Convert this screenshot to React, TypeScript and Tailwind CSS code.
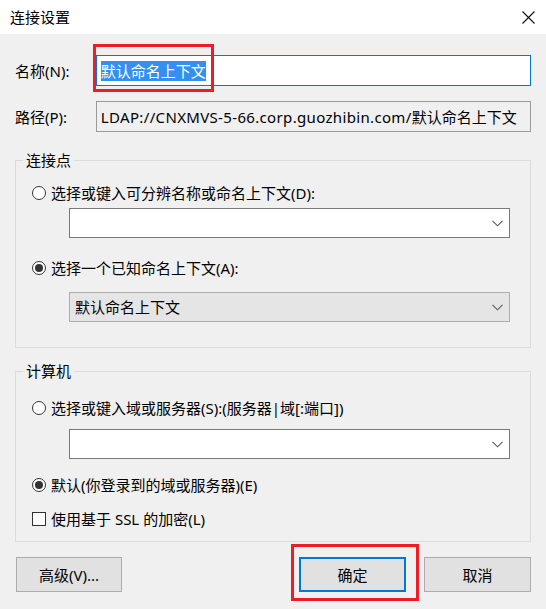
import React from "react";

function Chevron() {
  return (
    <svg width="11" height="7" viewBox="0 0 11 7">
      <path d="M0.5 0.8 L5.5 5.8 L10.5 0.8" fill="none" stroke="#5a5a5a" strokeWidth="1.1" />
    </svg>
  );
}

function Combo({ value, list }: { value?: string; list?: boolean }) {
  return (
    <div
      className={
        list
          ? "ml-[53px] flex h-[30px] w-[441px] items-center justify-between border border-[#adadad] bg-[#e5e5e5] pl-[5px] pr-[6px]"
          : "ml-[53px] flex h-[30px] w-[441px] items-center justify-between border border-[#7a7a7a] bg-white pl-[5px] pr-[6px]"
      }
    >
      <span className="text-[15px] leading-[20px] text-black">{value ?? ""}</span>
      <Chevron />
    </div>
  );
}

function Radio({ checked, label }: { checked?: boolean; label: string }) {
  return (
    <div className="flex h-[20px] items-center pl-[16px]">
      <span className="flex h-[14px] w-[14px] items-center justify-center rounded-full border border-[#333333] bg-white">
        {checked && <span className="h-[8px] w-[8px] rounded-full bg-[#333333]" />}
      </span>
      <span className="ml-[5px] text-[15px] leading-[20px] text-black">{label}</span>
    </div>
  );
}

function Group({ title, children, className }: { title: string; children: React.ReactNode; className: string }) {
  return (
    <fieldset className={"border border-[#dcdcdc] " + className}>
      <legend className="ml-[7px] px-[3px] text-[15px] leading-[20px] text-black">{title}</legend>
      {children}
    </fieldset>
  );
}

export default function App() {
  return (
    <div className="flex h-[609px] w-[546px] flex-col overflow-hidden bg-[#f0f0f0] font-['Noto_Sans','Noto_Sans_CJK_SC',sans-serif] text-black">
      {/* Title bar */}
      <div className="flex h-[34px] shrink-0 items-center justify-between bg-white pl-[10px] pr-[11px]">
        <span className="text-[15px] leading-[20px]">连接设置</span>
        <svg width="13" height="13" viewBox="0 0 13 13">
          <path d="M0.5 0.5 L12.5 12.5 M12.5 0.5 L0.5 12.5" stroke="#111" strokeWidth="1.1" fill="none" />
        </svg>
      </div>

      <div className="flex flex-col px-[15px]">
        {/* Name */}
        <div className="mt-[21px] flex items-center">
          <span className="w-[81px] text-[15px] leading-[20px]">名称(N):</span>
          <div className="relative flex h-[31px] w-[436px] items-center border border-[#0078d7] bg-white pl-[4px]">
            <span className="bg-[#3390f0] text-[15px] leading-[20px] text-white">默认命名上下文</span>
            <div className="pointer-events-none absolute left-[-4px] top-[-12px] h-[48px] w-[121px] border-[3px] border-[#ee1c25]" />
          </div>
        </div>

        {/* Path */}
        <div className="mt-[15px] flex items-center">
          <span className="w-[81px] text-[15px] leading-[20px]">路径(P):</span>
          <div className="flex h-[31px] w-[436px] items-center border border-[#9a9a9a] bg-[#f0f0f0] pl-[4px]">
            <span className="whitespace-nowrap text-[15px] leading-[20px]">
              <span className="tracking-[0.34px]">LDAP://CNXMVS-5-66.corp.guozhibin.com/</span>默认命名上下文
            </span>
          </div>
        </div>

        {/* Group 1 */}
        <Group title="连接点" className="mt-[18px] pb-[25px] pt-[13px]">
          <Radio label="选择或键入可分辨名称或命名上下文(D):" />
          <div className="mt-[5px]">
            <Combo />
          </div>
          <div className="mt-[20px]">
            <Radio checked label="选择一个已知命名上下文(A):" />
          </div>
          <div className="mt-[14px]">
            <Combo list value="默认命名上下文" />
          </div>
        </Group>

        {/* Group 2 */}
        <Group title="计算机" className="mt-[13px] pb-[12px] pt-[17px]">
          <Radio label="选择或键入域或服务器(S):(服务器|域[:端口])" />
          <div className="mt-[11px]">
            <Combo />
          </div>
          <div className="mt-[16px]">
            <Radio checked label="默认(你登录到的域或服务器)(E)" />
          </div>
          <div className="mt-[14px] flex h-[20px] items-center pl-[16px]">
            <span className="h-[14px] w-[14px] border border-[#333333] bg-white" />
            <span className="ml-[5px] text-[15px] leading-[20px]">使用基于 SSL 的加密(L)</span>
          </div>
        </Group>

        {/* Buttons */}
        <div className="mt-[15px] flex items-center justify-between pl-[1px]">
          <button className="h-[35px] w-[106px] border border-[#adadad] bg-[#e1e1e1] text-[15px] leading-[20px]">
            高级(V)...
          </button>
          <div className="flex items-center gap-[18px]">
            <div className="relative">
              <button className="h-[35px] w-[107px] border-2 border-[#0078d7] bg-[#e1e1e1] text-[15px] leading-[20px]">
                确定
              </button>
              <div className="pointer-events-none absolute left-[-8px] top-[-13px] h-[57px] w-[128px] border-[3px] border-[#ee1c25]" />
            </div>
            <button className="h-[35px] w-[107px] border border-[#adadad] bg-[#e1e1e1] text-[15px] leading-[20px]">
              取消
            </button>
          </div>
        </div>
      </div>
    </div>
  );
}
